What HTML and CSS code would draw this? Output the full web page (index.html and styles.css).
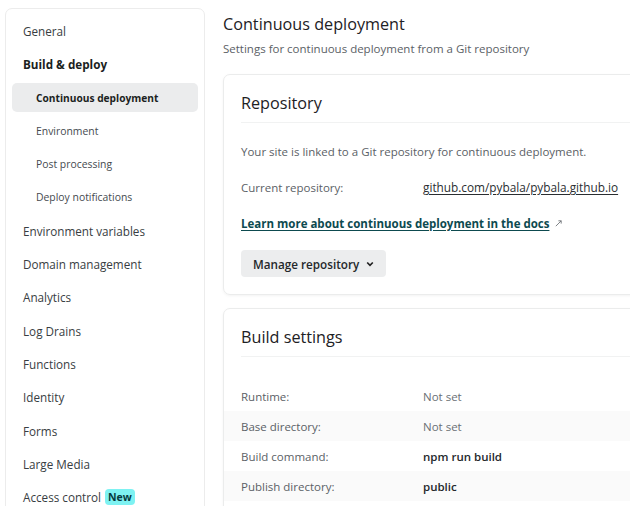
FILE: index.html
```html
<!DOCTYPE html>
<html lang="en">
<head>
<meta charset="utf-8">
<title>Continuous deployment</title>
<link rel="stylesheet" href="styles.css">
</head>
<body>
<div class="page">
  <nav class="sidebar">
    <ul class="nav-list">
      <li class="nav-item">General</li>
      <li class="nav-item nav-group">Build &amp; deploy</li>
      <li class="nav-item nav-sub nav-active">Continuous deployment</li>
      <li class="nav-item nav-sub">Environment</li>
      <li class="nav-item nav-sub">Post processing</li>
      <li class="nav-item nav-sub">Deploy notifications</li>
      <li class="nav-item">Environment variables</li>
      <li class="nav-item">Domain management</li>
      <li class="nav-item">Analytics</li>
      <li class="nav-item">Log Drains</li>
      <li class="nav-item">Functions</li>
      <li class="nav-item">Identity</li>
      <li class="nav-item">Forms</li>
      <li class="nav-item">Large Media</li>
      <li class="nav-item">Access control <span class="badge">New</span></li>
    </ul>
  </nav>
  <main class="main">
    <header class="page-header">
      <h1 class="page-title">Continuous deployment</h1>
      <p class="page-sub">Settings for continuous deployment from a Git repository</p>
    </header>
    <section class="card">
      <h2 class="card-title">Repository</h2>
      <div class="card-body">
        <p class="muted line">Your site is linked to a Git repository for continuous deployment.</p>
        <div class="kv line">
          <span class="kv-label">Current repository:</span>
          <a class="kv-link">github.com/pybala/pybala.github.io</a>
        </div>
        <div class="line">
          <a class="doc-link">Learn more about continuous deployment in the docs</a>
          <svg class="ext-icon" width="7" height="7" viewBox="0 0 7 7"><path d="M0.8 6.2 L6.2 0.8 M3.4 0.8 H6.2 V3.6" fill="none" stroke="#707579" stroke-width="0.9"/></svg>
        </div>
        <button class="btn">Manage repository
          <svg class="chev" width="8" height="6" viewBox="0 0 8 6"><path d="M1.2 1.5 L4 4.3 L6.8 1.5" fill="none" stroke="#222" stroke-width="1.7"/></svg>
        </button>
      </div>
    </section>
    <section class="card card-build">
      <h2 class="card-title">Build settings</h2>
      <div class="rows">
        <div class="row"><span class="kv-label">Runtime:</span><span class="val-muted">Not set</span></div>
        <div class="row row-alt"><span class="kv-label">Base directory:</span><span class="val-muted">Not set</span></div>
        <div class="row"><span class="kv-label">Build command:</span><span class="val">npm run build</span></div>
        <div class="row row-alt"><span class="kv-label">Publish directory:</span><span class="val">public</span></div>
      </div>
    </section>
  </main>
</div>
</body>
</html>
```

FILE: styles.css
```css
* { box-sizing: border-box; }
html, body { margin: 0; padding: 0; background: #ffffff; overflow: hidden; }
body {
  font-family: "Open Sans", "Noto Sans", sans-serif;
  color: #1f2326;
  width: 630px;
  height: 506px;
}
.page {
  display: flex;
  gap: 18px;
  padding: 8px 0 0 5px;
  width: 720px;
}
.sidebar {
  flex: 0 0 200px;
  border: 1px solid #ececec;
  border-radius: 7px;
  padding: 7.5px 6px 20px 6px;
  height: 560px;
}
.nav-list {
  list-style: none;
  margin: 0;
  padding: 0;
  display: flex;
  flex-direction: column;
  gap: 4.3px;
}
.nav-item {
  height: 29px;
  display: flex;
  align-items: center;
  padding-left: 11px;
  font-size: 11.7px;
  color: #383d42;
  border-radius: 5px;
  white-space: nowrap;
}
.nav-group { font-weight: 700; color: #1b1f22; }
.nav-sub { padding-left: 24px; font-size: 10.4px; color: #454a4f; }
.nav-active { background: #ebeced; font-weight: 700; color: #1b1f22; font-size: 10.2px; }
.badge {
  margin-left: 4px;
  background: #7ef2f2;
  color: #063a3f;
  font-weight: 700;
  font-size: 10.5px;
  padding: 0 3px;
  border-radius: 4px;
  line-height: 16px;
}
.main {
  flex: 0 0 470px;
  display: flex;
  flex-direction: column;
}
.page-header { padding-top: 5px; margin-bottom: 16px; }
.page-title {
  margin: 0;
  font-size: 16.2px;
  font-weight: 400;
  color: #1d2124;
  line-height: 22px;
}
.page-sub {
  margin: 5px 0 0 0;
  font-size: 11.5px;
  color: #5b6166;
  line-height: 18px;
}
.card {
  border: 1px solid #ebecec;
  border-radius: 7px;
  box-shadow: 0 1px 3px rgba(0,0,0,0.05);
  padding: 16px 0 17px 17px;
  margin-bottom: 13px;
}
.card-title {
  margin: 0;
  font-size: 16.2px;
  font-weight: 400;
  color: #1d2124;
  line-height: 24px;
  padding-bottom: 7px;
  border-bottom: 1px solid #f1f2f2;
}
.card-body {
  display: flex;
  flex-direction: column;
  align-items: flex-start;
  padding-top: 10px;
}
.line {
  margin: 0;
  height: 36px;
  display: flex;
  align-items: center;
  font-size: 11.5px;
}
.muted { color: #5b6166; }
.kv-label { width: 182px; flex: 0 0 182px; color: #5b6166; font-size: 11.5px; }
.kv-link { color: #2a2e31; font-size: 11.8px; text-decoration: underline; text-underline-offset: 2px; }
.doc-link {
  color: #0d4a4f;
  font-weight: 700;
  text-decoration: underline;
  text-underline-offset: 2px;
}
.ext-icon { margin-left: 6px; }
.btn {
  margin-top: 9px;
  font-family: inherit;
  font-size: 11.7px;
  font-weight: 600;
  color: #24282b;
  background: #ecedee;
  border: none;
  border-radius: 4px;
  height: 27px;
  padding: 0 12px;
  display: flex;
  align-items: center;
  gap: 7px;
}
.rows { padding-top: 24px; margin-left: -17px; }
.row {
  height: 30px;
  display: flex;
  align-items: center;
  padding-left: 17px;
  font-size: 11.5px;
}
.row-alt { background: #fafafa; }
.val-muted { color: #6a7075; }
.val { color: #24282b; font-weight: 600; }
```
